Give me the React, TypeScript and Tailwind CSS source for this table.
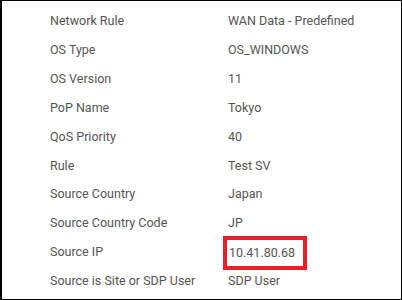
const rows: [string, string][] = [
  ["Network Rule", "WAN Data - Predefined"],
  ["OS Type", "OS_WINDOWS"],
  ["OS Version", "11"],
  ["PoP Name", "Tokyo"],
  ["QoS Priority", "40"],
  ["Rule", "Test SV"],
  ["Source Country", "Japan"],
  ["Source Country Code", "JP"],
  ["Source IP", "10.41.80.68"],
  ["Source is Site or SDP User", "SDP User"],
];

export default function App() {
  return (
    <div className="w-[402px] h-[300px] border border-l-2 border-black bg-white font-['Roboto',sans-serif] text-[12.5px] text-[#555]">
      <div className="flex flex-col pt-[6px]">
        {rows.map(([label, value]) => (
          <div key={label} className="flex h-[28.9px] items-center whitespace-nowrap">
            <div className="w-[226px] pl-[48px]">{label}</div>
            <div className="flex-1">
              {label === "Source IP" ? (
                <span className="-ml-[5px] -my-[4px] inline-block border-4 border-[#e8202a] pl-[2px] pr-[8px] leading-[26px]">
                  {value}
                </span>
              ) : (
                value
              )}
            </div>
          </div>
        ))}
      </div>
    </div>
  );
}
